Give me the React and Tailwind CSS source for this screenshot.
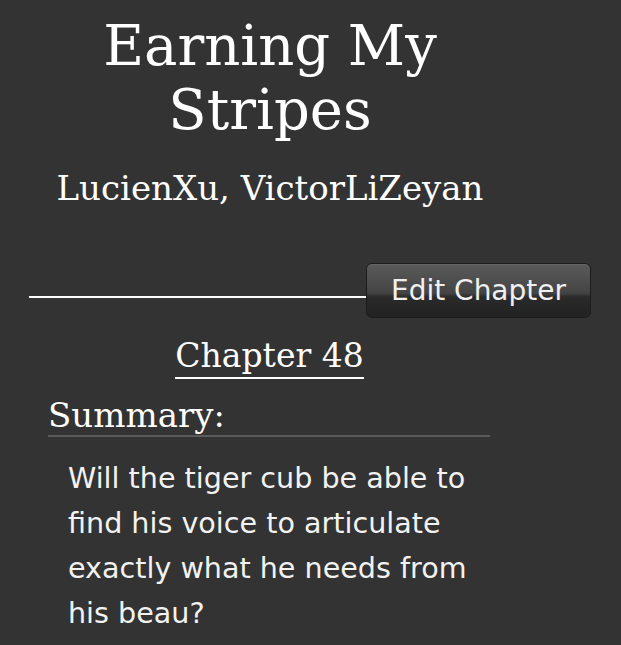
import React from 'react';

const serif = "font-['DejaVu_Serif',Georgia,serif]";
const sans = "font-['DejaVu_Sans','Lucida_Grande',sans-serif]";

function ChapterBar() {
  return (
    <div className="mt-[55px] ml-[29px] flex w-[562px] items-start">
      <div className="mt-[33px] h-[2px] flex-1 bg-white" />
      <button
        className={`${sans} h-[55px] w-[225px] rounded-[6px] border border-[#1c1c1c] bg-[linear-gradient(to_bottom,#5a5a5a_0%,#444_55%,#2a2a2a_62%,#222_100%)] text-[28px] leading-none text-[#f0f0f0] shadow-[inset_0_1px_0_rgba(255,255,255,0.08)]`}
      >
        Edit Chapter
      </button>
    </div>
  );
}

export default function App() {
  return (
    <div className="min-h-screen w-full bg-[#333333] text-white">
      <header className={`${serif} w-[540px] pt-[14px] text-center`}>
        <h1 className="text-[56px] font-normal leading-[64px]">
          Earning My
          <br />
          Stripes
        </h1>
        <p className="mt-[26px] text-[34px] leading-[40px]">LucienXu, VictorLiZeyan</p>
      </header>

      <ChapterBar />

      <div className={`${serif} mt-[21px] w-[539px] text-center`}>
        <h2 className="inline-block border-b-2 border-white pb-[4px] text-[33px] font-normal leading-[34px]">
          Chapter 48
        </h2>
      </div>

      <section className="ml-[48px] mt-[16px] w-[442px]">
        <h3 className={`${serif} border-b-2 border-[#5a5a5a] text-[34px] font-normal leading-[40px]`}>
          Summary:
        </h3>
        <p className={`${sans} ml-[20px] mt-[19px] w-[410px] text-[28.6px] leading-[45px] text-[#f2f2f2]`}>
          Will the tiger cub be able to find his voice to articulate exactly what he needs from his beau?
        </p>
      </section>
    </div>
  );
}
